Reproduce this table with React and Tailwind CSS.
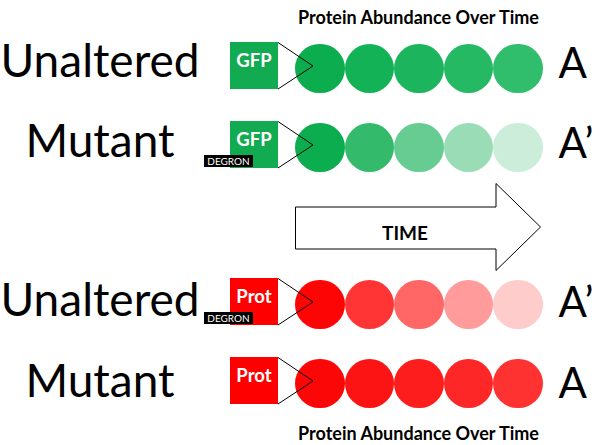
import React from "react";

const greenA = ["bg-[#0cad4e]", "bg-[#14b257]", "bg-[#1cb55d]", "bg-[#25b964]", "bg-[#30bd6c]"];
const greenB = ["bg-[#0cad4e]", "bg-[#33bb6b]", "bg-[#66cc92]", "bg-[#99dcb5]", "bg-[#ccedda]"];
const redA = ["bg-[#fe0505]", "bg-[#ff3535]", "bg-[#ff6767]", "bg-[#ff9b9b]", "bg-[#ffcccc]"];
const redB = ["bg-[#fb0707]", "bg-[#fc1313]", "bg-[#fd1d1d]", "bg-[#fe2727]", "bg-[#ff3232]"];

function Row({ label, labelOffset, aOffset, boxColor, boxText, degron, circles, end }) {
  return (
    <div className="flex items-start h-[50px]">
      <div className={`w-[200px] text-center text-[46px] leading-none text-black ${labelOffset}`}>
        {label}
      </div>
      <div className="relative ml-[30px] flex items-start">
        <div className={`relative w-[48px] h-[47px] ${boxColor} flex justify-center pt-[9px]`}>
          <span className="text-white font-bold text-[18.5px] leading-none">{boxText}</span>
          {degron && (
            <div className="absolute left-[-26px] top-[34px] w-[49px] h-[12px] bg-black text-white text-[10px] leading-none flex items-center justify-center">
              DEGRON
            </div>
          )}
        </div>
        <div className="flex ml-[17px] mt-[2px]">
          {circles.map((c, i) => (
            <div key={i} className={`w-[49.5px] h-[49px] rounded-full ${c}`} />
          ))}
        </div>
        <svg
          className="absolute left-[48px] top-0"
          width="36"
          height="48"
          viewBox="0 0 36 48"
        >
          <polyline points="0,0.5 35,24 0,47" fill="none" stroke="#000" strokeWidth="1" />
        </svg>
      </div>
      <div className={`ml-[16px] text-[42px] leading-none text-black ${aOffset}`}>{end}</div>
    </div>
  );
}

export default function App() {
  return (
    <div className="w-[600px] h-[445px] bg-white overflow-hidden flex flex-col font-[Lato,sans-serif]">
      <div className="pt-[8px] h-[26px] flex">
        <div className="ml-[295px] w-[247px] text-center font-bold text-[18px] leading-none text-black whitespace-nowrap">
          Protein Abundance Over Time
        </div>
      </div>

      <div className="mt-[16px]">
        <Row
          label="Unaltered"
          labelOffset="mt-[-5px]"
          aOffset="mt-[-1px]"
          boxColor="bg-[#13ab52]"
          boxText="GFP"
          circles={greenA}
          end="A"
        />
      </div>
      <div className="mt-[29px]">
        <Row
          label="Mutant"
          labelOffset="mt-[-4px]"
          aOffset="mt-[0px]"
          boxColor="bg-[#13ab52]"
          boxText="GFP"
          degron
          circles={greenB}
          end="A’"
        />
      </div>

      <div className="mt-[12px] h-[88px] flex">
        <div className="relative ml-[295px] w-[247px] h-[88px]">
          <svg width="247" height="88" viewBox="0 0 247 88" className="block">
            <polygon
              points="0.5,24 201,24 201,0.5 245.5,44 201,87.5 201,66 0.5,66"
              fill="#fff"
              stroke="#000"
              strokeWidth="1"
            />
          </svg>
          <div className="absolute left-[87px] top-[40px] font-bold text-[19px] leading-none text-black">
            TIME
          </div>
        </div>
      </div>

      <div className="mt-[7px]">
        <Row
          label="Unaltered"
          labelOffset="mt-[-2px]"
          aOffset="mt-[2px]"
          boxColor="bg-[#ff0000]"
          boxText="Prot"
          degron
          circles={redA}
          end="A’"
        />
      </div>
      <div className="mt-[29px]">
        <Row
          label="Mutant"
          labelOffset="mt-[0px]"
          aOffset="mt-[4px]"
          boxColor="bg-[#ff0000]"
          boxText="Prot"
          circles={redB}
          end="A"
        />
      </div>

      <div className="mt-[17px] flex">
        <div className="ml-[295px] w-[247px] text-center font-bold text-[18px] leading-none text-black whitespace-nowrap">
          Protein Abundance Over Time
        </div>
      </div>
    </div>
  );
}
